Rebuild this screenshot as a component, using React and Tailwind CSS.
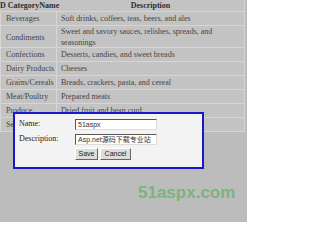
import React from 'react';

const ROWS = [
  { name: 'Beverages', desc: 'Soft drinks, coffees, teas, beers, and ales', h: 'h-[14px]' },
  { name: 'Condiments', desc: 'Sweet and savory sauces, relishes, spreads, and seasonings', h: 'h-[22px]' },
  { name: 'Confections', desc: 'Desserts, candies, and sweet breads', h: 'h-[14px]' },
  { name: 'Dairy Products', desc: 'Cheeses', h: 'h-[14px]' },
  { name: 'Grains/Cereals', desc: 'Breads, crackers, pasta, and cereal', h: 'h-[14px]' },
  { name: 'Meat/Poultry', desc: 'Prepared meats', h: 'h-[14px]' },
  { name: 'Produce', desc: 'Dried fruit and bean curd', h: 'h-[14px]' },
  { name: 'Seafood', desc: 'Seaweed and fish', h: 'h-[14px]' },
];

const serif = "font-['Liberation_Serif',serif]";

export default function App() {
  return (
    <div className={`relative w-[247px] h-[222px] overflow-hidden bg-[#bcbcbc] text-[#454545] ${serif}`}>
      {/* grid behind the modal */}
      <div className="w-[245px] border-r border-[#d4d4d4] bg-[#c3c3c3] text-[8px] leading-[11px]">
        <div className="grid grid-cols-[57px_1fr] h-[12px] items-center border-b border-[#d6d6d6] font-bold text-[#2e2e2e]">
          <div className="whitespace-nowrap">D CategoryName</div>
          <div className="text-center">Description</div>
        </div>
        {ROWS.map((r) => (
          <div key={r.name} className={`grid grid-cols-[57px_1fr] ${r.h} border-b border-[#d6d6d6]`}>
            <div className="flex items-center pl-[5px] border-l border-r border-[#d6d6d6] whitespace-nowrap">{r.name}</div>
            <div className="flex items-center pl-[4px] pr-[30px]">{r.desc}</div>
          </div>
        ))}
      </div>

      {/* edit popup */}
      <div className="absolute left-[13px] top-[112px] w-[191px] h-[57px] border-2 border-[#1818c8] bg-[#f3f3f3] pl-[4px] pt-[4px]">
        <div className="grid grid-cols-[56px_82px] gap-y-[3px] items-center text-[8px] text-[#222]">
          <div>Name:</div>
          <div className="h-[11px] bg-white border-t border-l border-[#555] border-b border-r border-b-[#ddd] border-r-[#ddd] pl-[2px] font-['Liberation_Sans',sans-serif] text-[7px] leading-[9px] text-[#333]">51aspx</div>
          <div>Description:</div>
          <div className="h-[11px] bg-white border-t border-l border-[#555] border-b border-r border-b-[#ddd] border-r-[#ddd] pl-[2px] font-['Liberation_Sans','Noto_Sans_CJK_SC',sans-serif] text-[7px] leading-[9px] text-[#333] whitespace-nowrap overflow-hidden">Asp.net源码下载专业站</div>
          <div />
          <div className="flex gap-[2px] font-['Liberation_Sans',sans-serif] text-[7px]">
            <div className="h-[12px] w-[23px] flex items-center justify-center bg-[#dedcd8] border border-t-white border-l-white border-b-[#666] border-r-[#666]">Save</div>
            <div className="h-[12px] w-[31px] flex items-center justify-center bg-[#dedcd8] border border-t-white border-l-white border-b-[#666] border-r-[#666]">Cancel</div>
          </div>
        </div>
      </div>

      <div className="absolute left-[138px] top-[183px] font-['Liberation_Sans',sans-serif] font-bold text-[17px] leading-[20px] text-[#7db37d]">51aspx.com</div>
    </div>
  );
}
